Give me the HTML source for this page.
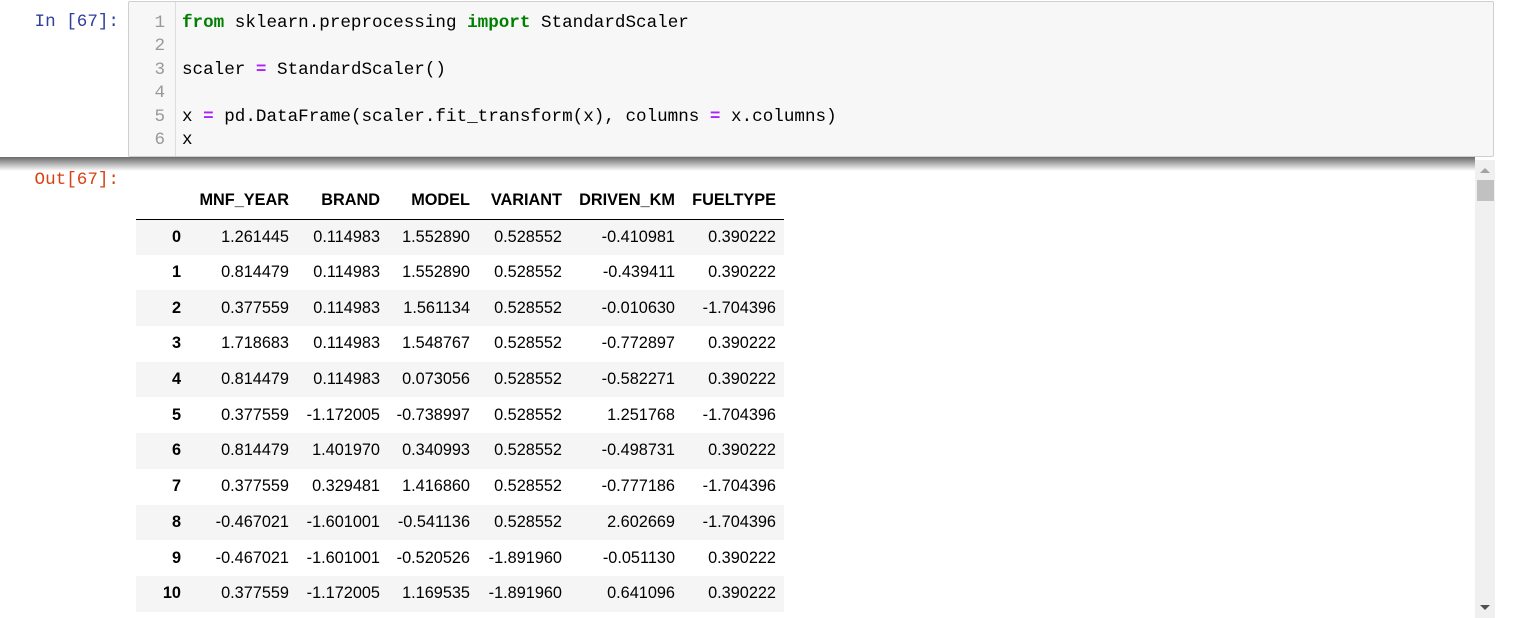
<!DOCTYPE html>
<html><head><meta charset="utf-8"><style>
body{margin:0;width:1513px;height:618px;background:#fff;overflow:hidden;position:relative;font-family:"Liberation Sans",sans-serif}
.mono{font-family:"Liberation Mono",monospace;font-size:17.6px}
.prompt{position:absolute;left:0;width:119px;text-align:right;}
.code{position:absolute;left:128px;top:1px;width:1366px;height:156px;background:#f7f7f7;border:1px solid #cfcfcf;border-radius:2px;box-sizing:border-box}
.gut{position:absolute;left:0;top:0;width:46px;height:154px;border-right:1px solid #ddd;}
.ln{position:absolute;right:10px;color:#999;}
.cl{position:absolute;left:53px;white-space:pre;color:#000}
.kw{color:#008000;font-weight:bold}.op{color:#aa22ff;font-weight:bold}
.shadow{position:absolute;left:0;top:157px;width:1475px;height:14px;background:linear-gradient(#6a6a6a,#fff)}
table{position:absolute;left:136px;top:182px;border-collapse:collapse;font-size:16.3px;color:#000}
td,th{padding:0 8px 0 0;text-align:right;height:35.7px;box-sizing:border-box}
thead th{font-weight:bold;height:37px;border-bottom:1px solid #000}
tbody th{font-weight:bold}
tbody tr:nth-child(odd){background:#f5f5f5}
.sb{position:absolute;left:1475px;top:160px;width:20px;height:458px;background:#f0f0f0}
.thumb{position:absolute;left:2px;top:20px;width:17px;height:21px;background:#c1c1c1}
</style></head><body>
<div class="prompt mono" style="top:12px;color:#303f9f;font-size:17.6px">In [67]:</div>
<div class="code mono">
<div class="gut">
<div class="ln" style="top:11px">1</div><div class="ln" style="top:34px">2</div><div class="ln" style="top:58px">3</div><div class="ln" style="top:81px">4</div><div class="ln" style="top:105px">5</div><div class="ln" style="top:128px">6</div>
</div>
<div class="cl" style="top:11px"><span class="kw">from</span> sklearn.preprocessing <span class="kw">import</span> StandardScaler</div>
<div class="cl" style="top:58px">scaler <span class="op">=</span> StandardScaler()</div>
<div class="cl" style="top:105px">x <span class="op">=</span> pd.DataFrame(scaler.fit_transform(x), columns <span class="op">=</span> x.columns)</div>
<div class="cl" style="top:128px">x</div>
</div>
<div class="shadow"></div>
<div class="prompt mono" style="top:170px;color:#d84315;font-size:17.6px">Out[67]:</div>
<table>
<thead><tr><th style="width:53px"></th><th style="width:108px">MNF_YEAR</th><th style="width:91px">BRAND</th><th style="width:90px">MODEL</th><th style="width:92px">VARIANT</th><th style="width:113px">DRIVEN_KM</th><th style="width:101px">FUELTYPE</th></tr></thead>
<tbody>
<tr><th>0</th><td>1.261445</td><td>0.114983</td><td>1.552890</td><td>0.528552</td><td>-0.410981</td><td>0.390222</td></tr>
<tr><th>1</th><td>0.814479</td><td>0.114983</td><td>1.552890</td><td>0.528552</td><td>-0.439411</td><td>0.390222</td></tr>
<tr><th>2</th><td>0.377559</td><td>0.114983</td><td>1.561134</td><td>0.528552</td><td>-0.010630</td><td>-1.704396</td></tr>
<tr><th>3</th><td>1.718683</td><td>0.114983</td><td>1.548767</td><td>0.528552</td><td>-0.772897</td><td>0.390222</td></tr>
<tr><th>4</th><td>0.814479</td><td>0.114983</td><td>0.073056</td><td>0.528552</td><td>-0.582271</td><td>0.390222</td></tr>
<tr><th>5</th><td>0.377559</td><td>-1.172005</td><td>-0.738997</td><td>0.528552</td><td>1.251768</td><td>-1.704396</td></tr>
<tr><th>6</th><td>0.814479</td><td>1.401970</td><td>0.340993</td><td>0.528552</td><td>-0.498731</td><td>0.390222</td></tr>
<tr><th>7</th><td>0.377559</td><td>0.329481</td><td>1.416860</td><td>0.528552</td><td>-0.777186</td><td>-1.704396</td></tr>
<tr><th>8</th><td>-0.467021</td><td>-1.601001</td><td>-0.541136</td><td>0.528552</td><td>2.602669</td><td>-1.704396</td></tr>
<tr><th>9</th><td>-0.467021</td><td>-1.601001</td><td>-0.520526</td><td>-1.891960</td><td>-0.051130</td><td>0.390222</td></tr>
<tr><th>10</th><td>0.377559</td><td>-1.172005</td><td>1.169535</td><td>-1.891960</td><td>0.641096</td><td>0.390222</td></tr>
</tbody></table>
<div class="sb"><div style="position:absolute;left:5px;top:8px;width:0;height:0;border-left:5px solid transparent;border-right:5px solid transparent;border-bottom:5px solid #a3a3a3"></div><div class="thumb"></div><div style="position:absolute;left:5px;top:445px;width:0;height:0;border-left:5px solid transparent;border-right:5px solid transparent;border-top:5px solid #505050"></div></div>
</body></html>
